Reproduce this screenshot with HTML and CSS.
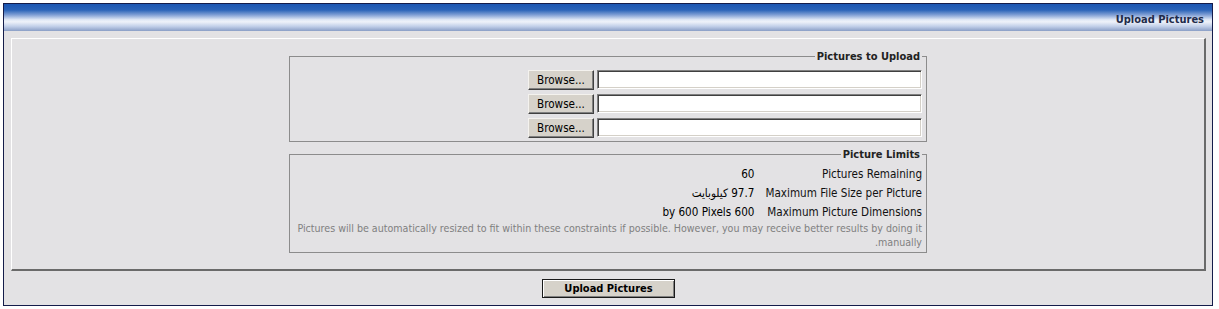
FILE: index.html
```html
<!DOCTYPE html>
<html lang="en" dir="rtl">
<head>
<meta charset="UTF-8">
<title>Upload Pictures</title>
<link rel="stylesheet" href="styles.css">
</head>
<body>
<div class="tborder">
    <div class="tcat">Upload Pictures</div>
    <div class="alt1">
        <div class="panel">
            <fieldset class="fieldset">
                <legend>Pictures to Upload</legend>
                <div class="file-row"><input class="file-text" type="text"><button class="browse-btn" dir="ltr">Browse...</button></div>
                <div class="file-row"><input class="file-text" type="text"><button class="browse-btn" dir="ltr">Browse...</button></div>
                <div class="file-row"><input class="file-text" type="text"><button class="browse-btn" dir="ltr">Browse...</button></div>
            </fieldset>
            <fieldset class="fieldset limits">
                <legend>Picture Limits</legend>
                <table class="limits-table">
                    <tr>
                        <td class="limit-label">Pictures Remaining</td>
                        <td>60</td>
                    </tr>
                    <tr>
                        <td class="limit-label">Maximum File Size per Picture</td>
                        <td>97.7 كيلوبايت</td>
                    </tr>
                    <tr>
                        <td class="limit-label">Maximum Picture Dimensions</td>
                        <td>600 by 600 Pixels</td>
                    </tr>
                </table>
                <div class="smallfont">Pictures will be automatically resized to fit within these constraints if possible. However, you may receive better results by doing it manually.</div>
            </fieldset>
        </div>
        <div class="submit-row">
            <button class="button">Upload Pictures</button>
        </div>
    </div>
</div>
</body>
</html>
```

FILE: styles.css
```css
body {
    margin: 3px 6px 0 3px;
    font-family: "DejaVu Sans Condensed", "DejaVu Sans", "Noto Sans", sans-serif;
    font-size: 11.6px;
    color: #000;
    background: #fff;
}
.tborder {
    border: 1px solid #141c4a;
    background: #e3e2e4;
}
.tcat {
    height: 27px;
    line-height: 31px;
    padding: 0 8px;
    font-size: 11px;
    font-weight: bold;
    color: #1f2b4a;
    background: linear-gradient(to bottom, #1b56b2 0%, #2a63b8 22%, #7f9ed4 40%, #dfe7f5 58%, #eef2f9 66%, #c4d1ea 82%, #8a9ec6 100%);
}
.alt1 {
    padding: 7px 6px 7px 7px;
}
.panel {
    border-top: 1px solid #fff;
    border-left: 1px solid #fff;
    border-right: 2px solid #6a6a6a;
    border-bottom: 2px solid #6a6a6a;
    padding: 11px 0 16px;
}
.fieldset {
    width: 627px;
    margin: 0 auto;
    padding: 1px 4px 3px 5px;
    border: 1px solid #8c8c8c;
}
.fieldset legend {
    padding: 0 2px;
    font-size: 11px;
    font-weight: bold;
    color: #222;
}
.limits {
    margin-top: 6px;
    padding-bottom: 3px;
}
.file-row {
    display: flex;
    align-items: flex-start;
    gap: 3px;
    margin-top: 4px;
}
.file-row:first-of-type {
    margin-top: 6px;
}
.file-text {
    width: 325px;
    height: 19px;
    box-sizing: border-box;
    margin: 0;
    padding: 0;
    border: 1px solid;
    border-color: #808080 #fff #fff #808080;
    box-shadow: inset 1px 1px #404040, inset -1px -1px #d4d0c8;
    background: #fff;
}
.browse-btn, .button {
    margin: 0;
    font-family: inherit;
    font-size: 11.6px;
    color: #000;
    background: #d6d2ca;
    cursor: pointer;
}
.browse-btn {
    width: 66px;
    height: 20px;
    padding: 0;
    border: 1px solid;
    border-color: #f4f2ee #404040 #404040 #f4f2ee;
    box-shadow: inset -1px -1px #808080;
}
.limits-table {
    width: 100%;
    border-collapse: collapse;
    margin-top: 3px;
}
.limits-table td {
    padding: 2px 0 2px 11px;
    line-height: 15px;
    white-space: nowrap;
}
.limits-table tr:last-child td {
    padding-bottom: 1px;
}
.limits-table .limit-label {
    width: 1%;
    color: #111;
}
.smallfont {
    font-size: 10.6px;
    line-height: 14px;
    color: #808080;
}
.submit-row {
    text-align: center;
    padding-top: 8px;
}
.button {
    width: 133px;
    height: 19px;
    padding: 0;
    font-size: 11px;
    font-weight: bold;
    border: 1px solid #1a1a1a;
    box-shadow: inset 1px 1px #fff, inset -1px -1px #808080;
}
```
